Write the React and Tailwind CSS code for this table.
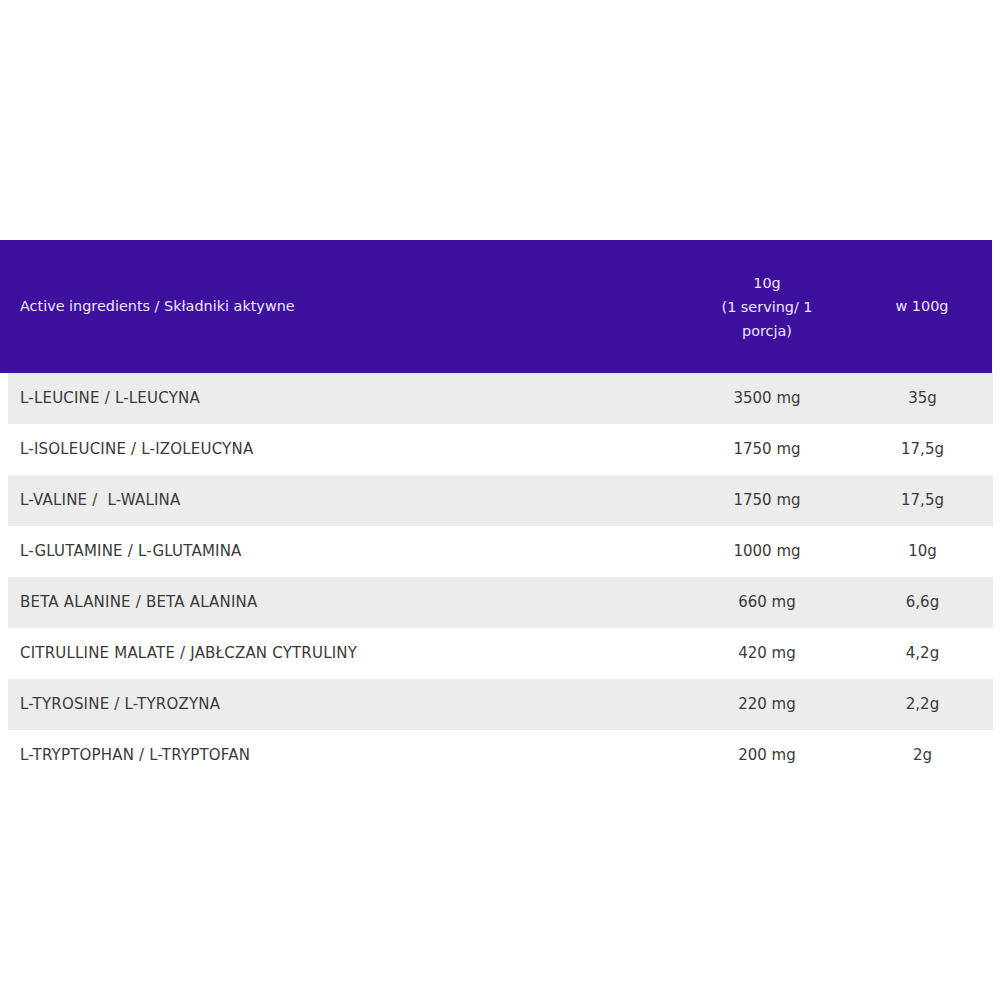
import React from 'react';

const ROWS = [
  ['L-LEUCINE / L-LEUCYNA', '3500 mg', '35g'],
  ['L-ISOLEUCINE / L-IZOLEUCYNA', '1750 mg', '17,5g'],
  ['L-VALINE /  L-WALINA', '1750 mg', '17,5g'],
  ['L-GLUTAMINE / L-GLUTAMINA', '1000 mg', '10g'],
  ['BETA ALANINE / BETA ALANINA', '660 mg', '6,6g'],
  ['CITRULLINE MALATE / JABŁCZAN CYTRULINY', '420 mg', '4,2g'],
  ['L-TYROSINE / L-TYROZYNA', '220 mg', '2,2g'],
  ['L-TRYPTOPHAN / L-TRYPTOFAN', '200 mg', '2g'],
];

export default function App() {
  return (
    <div className="w-[1000px] h-[1000px] bg-white pt-[240px] font-['DejaVu_Sans',Verdana,sans-serif]">
      {/* header */}
      <div className="w-[992px] h-[133px] bg-[#3e109e] text-[#ede6ff] text-[14.4px] grid grid-cols-[682px_170px_140px] items-center">
        <div className="pl-5">Active ingredients / Składniki aktywne</div>
        <div className="text-center leading-6">
          10g<br />(1 serving/ 1<br />porcja)
        </div>
        <div className="text-center">w 100g</div>
      </div>

      {/* body */}
      <div className="ml-2 w-[985px]">
        {ROWS.map(([name, serving, per100], i) => (
          <div
            key={name}
            className={`h-[51px] grid grid-cols-[674px_170px_141px] items-center text-[15px] text-[#3a3a3a] ${i % 2 === 0 ? 'bg-[#ececec]' : 'bg-white'}`}
          >
            <div className="pl-3 whitespace-pre tracking-[0.2px]">{name}</div>
            <div className="text-center">{serving}</div>
            <div className="text-center">{per100}</div>
          </div>
        ))}
      </div>
    </div>
  );
}
